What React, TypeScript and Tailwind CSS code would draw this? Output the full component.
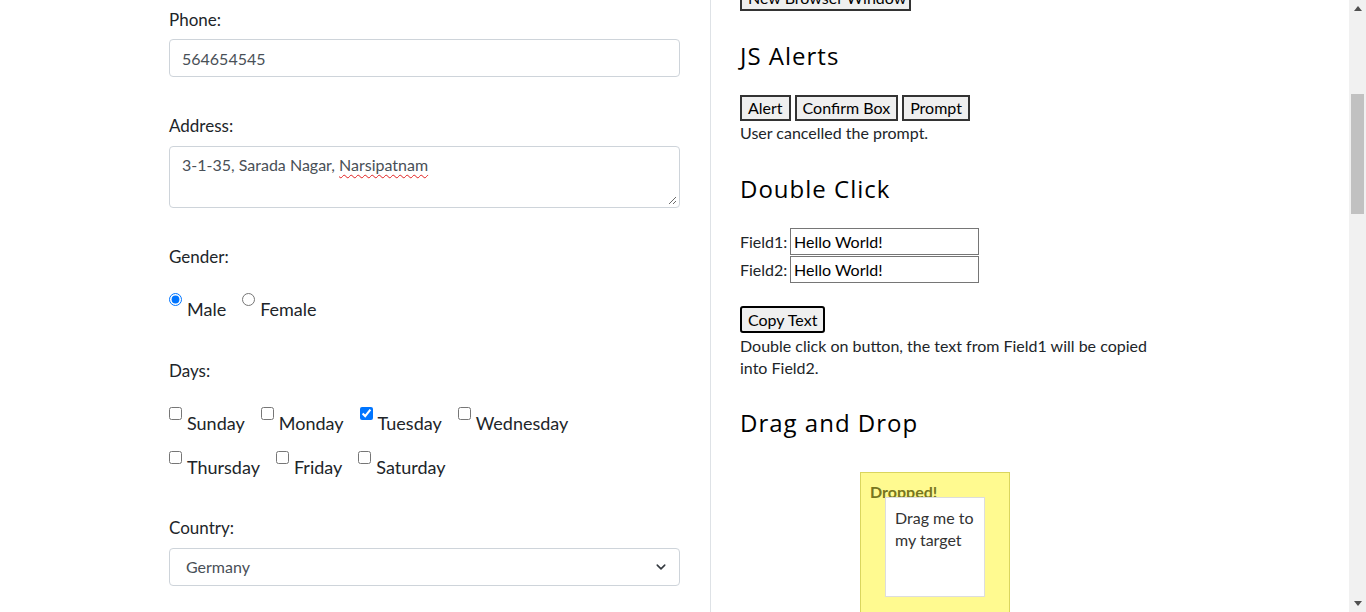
import React from 'react';

const days = [
  [
    { name: 'Sunday', checked: false },
    { name: 'Monday', checked: false },
    { name: 'Tuesday', checked: true },
    { name: 'Wednesday', checked: false },
  ],
  [
    { name: 'Thursday', checked: false },
    { name: 'Friday', checked: false },
    { name: 'Saturday', checked: false },
  ],
];

const Option: React.FC<{ type: 'radio' | 'checkbox'; label: string; checked: boolean }> = ({ type, label, checked }) => (
  <label className="flex items-start">
    <input type={type} checked={checked} readOnly className="m-0 h-[13px] w-[13px] shrink-0 accent-[#0075ff]" />
    <span className="ml-[5px] mt-[3px] text-[18px] leading-[26px]">{label}</span>
  </label>
);

const FormLabel: React.FC<{ children: React.ReactNode; className?: string }> = ({ children, className }) => (
  <div className={`text-[17px] leading-[24px] ${className ?? ''}`}>{children}</div>
);

const LeftForm: React.FC = () => (
  <div className="ml-[169px] w-[511px] shrink-0 pt-[8px] text-[#212529]">
    <FormLabel>Phone:</FormLabel>
    <input
      readOnly
      defaultValue="564654545"
      className="mt-[7px] block h-[38px] w-full rounded-[4px] border border-[#ced4da] px-[12px] text-[16px] text-[#495057] outline-none"
    />

    <FormLabel className="mt-[37px]">Address:</FormLabel>
    <div className="relative mt-[8px] h-[62px] w-full rounded-[4px] border border-[#ced4da] px-[12px] pt-[6px] text-[16px] leading-[24px] text-[#495057]">
      3-1-35, Sarada Nagar,{' '}
      <span className="underline decoration-wavy decoration-[#e02020] decoration-1 underline-offset-[3px]">Narsipatnam</span>
      <svg className="absolute bottom-[2px] right-[2px]" width="9" height="9" viewBox="0 0 9 9">
        <path d="M1 8L8 1M5 8L8 5" stroke="#6b6b6b" strokeWidth="1" />
      </svg>
    </div>

    <FormLabel className="mt-[37px]">Gender:</FormLabel>
    <div className="mt-[24px] flex gap-[16px]">
      <Option type="radio" label="Male" checked />
      <Option type="radio" label="Female" checked={false} />
    </div>

    <FormLabel className="mt-[37px]">Days:</FormLabel>
    <div className="mt-[24px] flex flex-col gap-[15px]">
      {days.map((row, i) => (
        <div key={i} className="flex gap-[16px]">
          {row.map(d => (
            <Option key={d.name} type="checkbox" label={d.name} checked={d.checked} />
          ))}
        </div>
      ))}
    </div>

    <FormLabel className="mt-[36px]">Country:</FormLabel>
    <div className="relative mt-[8px] h-[38px] w-full">
      <select
        defaultValue="Germany"
        className="block h-full w-full appearance-none rounded-[4px] border border-[#ced4da] bg-white pl-[16px] text-[16px] text-[#495057] outline-none"
      >
        <option>Germany</option>
      </select>
      <svg className="pointer-events-none absolute right-[13px] top-[14px]" width="12" height="10" viewBox="0 0 16 16">
        <path d="M2 5l6 6 6-6" fill="none" stroke="#343a40" strokeWidth="2.5" strokeLinecap="round" strokeLinejoin="round" />
      </svg>
    </div>
  </div>
);

const GrayButton: React.FC<{ children: React.ReactNode; className?: string }> = ({ children, className }) => (
  <button className={`h-[26px] whitespace-nowrap border-2 border-[#333333] bg-[#efefef] px-[6px] text-[16px] leading-[20px] text-black ${className ?? ''}`}>
    {children}
  </button>
);

const Heading: React.FC<{ children: React.ReactNode; className?: string }> = ({ children, className }) => (
  <h2 className={`font-['Open_Sans',sans-serif] text-[24px] leading-[29px] tracking-[1px] text-black ${className ?? ''}`}>{children}</h2>
);

const RightPanel: React.FC = () => (
  <div className="ml-[30px] flex-1 border-l border-[#dee2e6] pl-[29px] text-[#212529]">
    <GrayButton className="-mt-[16px] block h-[27px] w-[171px]">New Browser Window</GrayButton>

    <Heading className="mt-[30px]">JS Alerts</Heading>
    <div className="mt-[25px] flex gap-[4px]">
      <GrayButton>Alert</GrayButton>
      <GrayButton>Confirm Box</GrayButton>
      <GrayButton>Prompt</GrayButton>
    </div>
    <p className="mt-[1px] text-[16px] leading-[22px]">User cancelled the prompt.</p>

    <Heading className="mt-[30px]">Double Click</Heading>
    <div className="mt-[25px] flex flex-col gap-[1px] text-[16px]">
      {['Field1', 'Field2'].map(f => (
        <div key={f} className="flex items-center">
          <span className="w-[46px]">{f}:</span>
          <input
            readOnly
            defaultValue="Hello World!"
            className="ml-[4px] h-[27px] w-[189px] border border-[#767676] px-[3px] text-[16px] text-black outline-none"
          />
        </div>
      ))}
    </div>
    <button className="mt-[23px] block h-[27px] rounded-[3px] border-2 border-black bg-[#efefef] px-[6px] text-[16px] leading-[20px] text-black">
      Copy Text
    </button>
    <p className="mt-[2px] w-[425px] text-[16px] leading-[22px]">
      Double click on button, the text from Field1 will be copied into Field2.
    </p>

    <Heading className="mt-[29px]">Drag and Drop</Heading>
    <div className="relative ml-[120px] mt-[35px] h-[150px] w-[150px] border border-[#dad55e] bg-[#fffa90] pl-[9px] pt-[8px] text-[#777620]">
      <p className="text-[16px] font-bold leading-[22px]">Dropped!</p>
      <div className="absolute left-[24px] top-[24px] h-[100px] w-[100px] border border-[#dddddd] bg-white p-[9px] text-[16px] leading-[22px] text-[#333333]">
        Drag me to my target
      </div>
    </div>
  </div>
);

const Scrollbar: React.FC = () => (
  <div className="flex h-full w-[17px] shrink-0 flex-col bg-[#f1f1f1]">
    <div className="flex h-[17px] items-center justify-center">
      <svg width="8" height="5" viewBox="0 0 8 5"><path d="M4 0L8 5H0z" fill="#505050" /></svg>
    </div>
    <div className="flex-1">
      <div className="mx-[2px] mt-[77px] h-[120px] bg-[#c1c1c1]" />
    </div>
    <div className="flex h-[17px] items-center justify-center">
      <svg width="8" height="5" viewBox="0 0 8 5"><path d="M0 0H8L4 5z" fill="#505050" /></svg>
    </div>
  </div>
);

export default function App() {
  return (
    <div className="flex h-[612px] w-full overflow-hidden bg-white font-['Lato',sans-serif]">
      <div className="flex min-w-0 flex-1">
        <LeftForm />
        <RightPanel />
      </div>
      <Scrollbar />
    </div>
  );
}
